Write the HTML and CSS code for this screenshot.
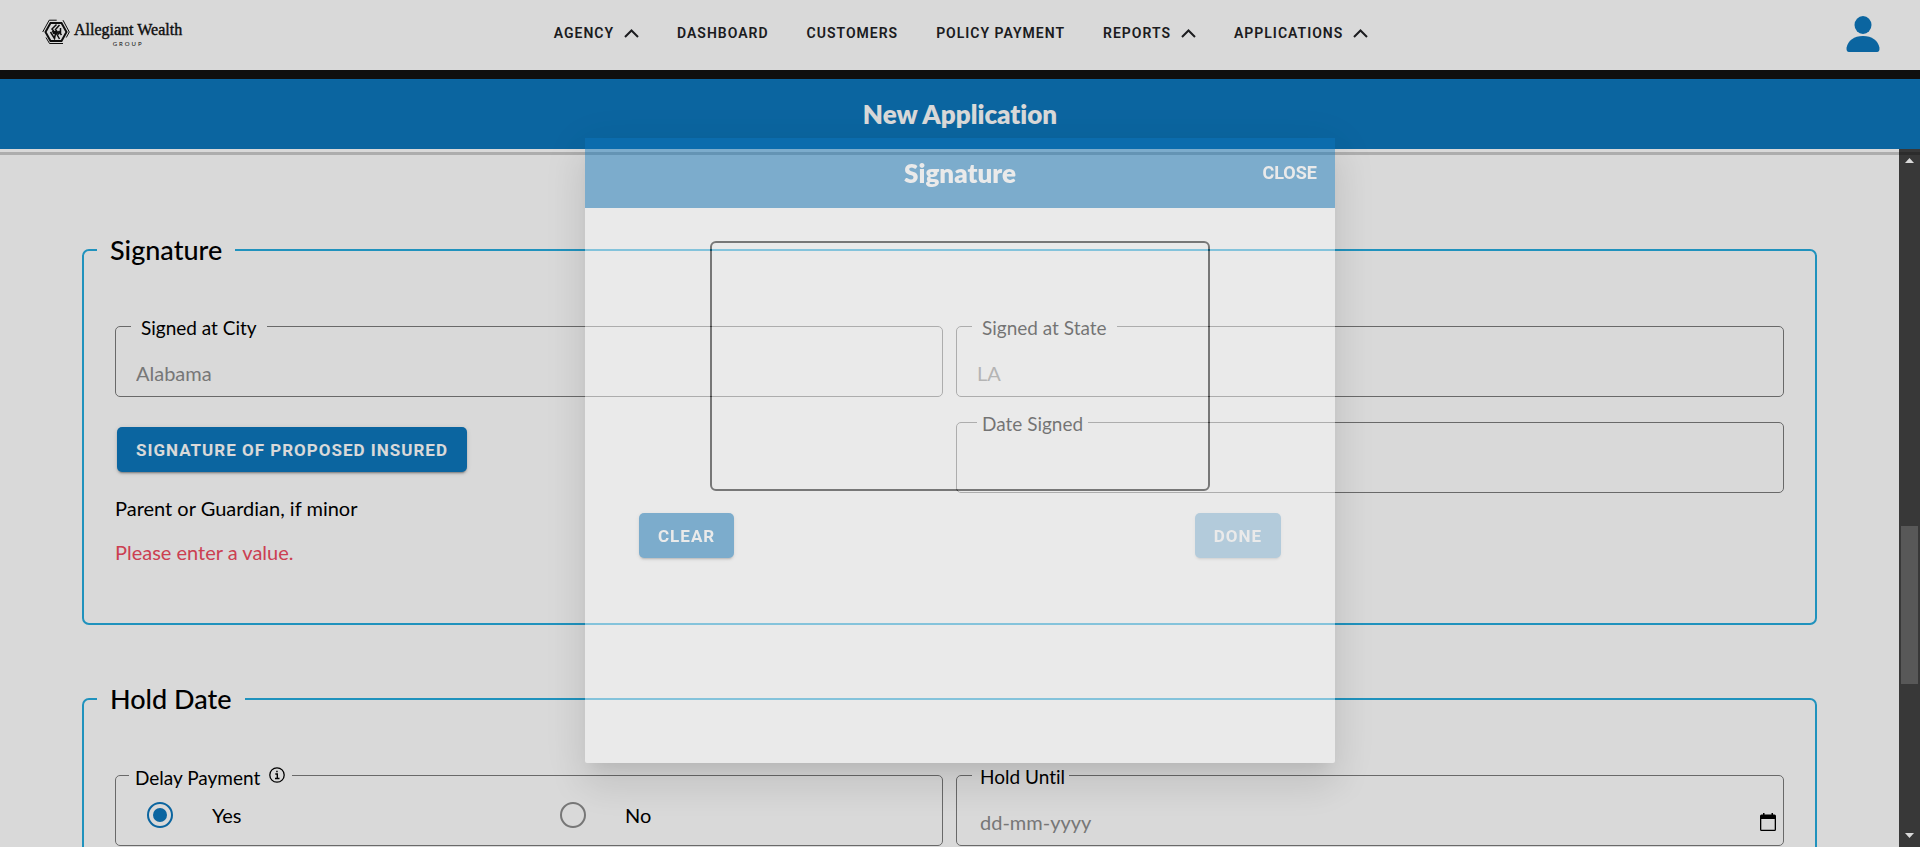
FILE: index.html
```html
<!DOCTYPE html>
<html lang="en">
<head>
<meta charset="utf-8">
<title>New Application</title>
<link rel="stylesheet" href="styles.css">
</head>
<body>
<div class="app">
  <header class="topbar">
    <a class="brand" href="#">
      <svg class="brand-mark" viewBox="0 0 28 26" fill="none" stroke="#111" aria-hidden="true">
        <path d="M8.500 4h11l5 9-5 9h-11l-5-9z" stroke-width="2"/>
        <path d="M.700 13 7.200 1.200h7.500M21 1.200 27.300 13l-3 5.500M4 18.500l3.500 6H21" stroke-width="1"/>
        <path d="M14.500 5.500 10 10l4 5M17.500 6l-4 4.500 3.500 5M8.500 13l4 6.500 1-5M13 12l4.500 8M16.500 12l3 4M10.500 12l1.500 3M18.500 9v5" stroke-width="1.500"/>
      </svg>
      <span class="brand-text"><span class="brand-name">Allegiant Wealth</span><span class="brand-sub">GROUP</span></span>
    </a>
    <nav class="nav">
      <a href="#">AGENCY <svg class="chev" viewBox="0 0 15 9"><path d="M1 8 7.500 1.500 14 8"/></svg></a>
      <a href="#">DASHBOARD</a>
      <a href="#">CUSTOMERS</a>
      <a href="#">POLICY PAYMENT</a>
      <a href="#">REPORTS <svg class="chev" viewBox="0 0 15 9"><path d="M1 8 7.500 1.500 14 8"/></svg></a>
      <a href="#">APPLICATIONS <svg class="chev" viewBox="0 0 15 9"><path d="M1 8 7.500 1.500 14 8"/></svg></a>
    </nav>
    <button class="user" type="button" aria-label="Account">
      <svg viewBox="0 0 34 37" fill="#0d77bc"><ellipse cx="17" cy="10" rx="8.500" ry="9"/><path d="M17 21C8 21 2 25.500.600 32.500.200 35 1 37 3 37h28c2 0 2.800-2 2.400-4.500C32 25.500 26 21 17 21z"/></svg>
    </button>
  </header>
  <div class="title-band"><h1>New Application</h1></div>
  <div class="workspace">
    <main class="content">
      <fieldset class="section">
        <legend>Signature</legend>
        <div class="columns">
          <div class="column">
            <fieldset class="field">
              <legend><label for="city">Signed at City</label></legend>
              <input id="city" type="text" value="Alabama">
            </fieldset>
            <div class="sign">
              <button class="btn" type="button">SIGNATURE OF PROPOSED INSURED</button>
              <p>Parent or Guardian, if minor</p>
              <p class="error">Please enter a value.</p>
            </div>
          </div>
          <div class="column">
            <fieldset class="field">
              <legend><label for="state">Signed at State</label></legend>
              <input id="state" type="text" value="LA">
            </fieldset>
            <fieldset class="field">
              <legend class="tight"><label for="signed">Date Signed</label></legend>
              <input id="signed" type="text">
            </fieldset>
          </div>
        </div>
      </fieldset>
      <fieldset class="section">
        <legend>Hold Date</legend>
        <div class="columns">
          <fieldset class="field delay">
            <legend>Delay Payment
              <svg class="info" viewBox="0 0 16 16" fill="none" stroke="#000"><circle cx="8" cy="8" r="7.200" stroke-width="1.300"/><path d="M6.300 7h2v4.500M6 11.500h4.500" stroke-width="1.400"/><path d="M7.200 4.500h1.500" stroke-width="1.700"/></svg>
            </legend>
            <div class="choices">
              <label><input type="radio" name="delay" checked><span>Yes</span></label>
              <label><input type="radio" name="delay"><span>No</span></label>
            </div>
          </fieldset>
          <fieldset class="field date">
            <legend><label for="until">Hold Until</label></legend>
            <div class="date-row">
              <input id="until" type="text" placeholder="dd-mm-yyyy">
              <button class="calendar" type="button" aria-label="Pick a date">
                <svg viewBox="0 0 16 18"><path d="M0 3a1.500 1.500 0 0 1 1.500-1.500H3V0h1.500v1.500h7V0H13v1.500h1.500A1.500 1.500 0 0 1 16 3v13.500a1.500 1.500 0 0 1-1.500 1.500h-13A1.500 1.500 0 0 1 0 16.500zM1.300 6v10.700h13.400V6z" fill-rule="evenodd"/></svg>
              </button>
            </div>
          </fieldset>
        </div>
      </fieldset>
    </main>
    <div class="scrollbar" aria-hidden="true">
      <svg class="arrow" viewBox="0 0 9 5"><path d="M0 5 4.500 0 9 5z"/></svg>
      <div class="track"><div class="thumb"></div></div>
      <svg class="arrow" viewBox="0 0 9 5"><path d="M0 0h9L4.500 5z"/></svg>
    </div>
  </div>
</div>
<div class="backdrop">
  <div class="dialog" role="dialog" aria-labelledby="dialog-title">
    <div class="dialog-head">
      <h2 id="dialog-title">Signature</h2>
      <button class="close" type="button">CLOSE</button>
    </div>
    <div class="dialog-body">
      <div class="pad"></div>
      <div class="actions">
        <button class="btn" type="button">CLEAR</button>
        <button class="btn" type="button" disabled>DONE</button>
      </div>
    </div>
  </div>
</div>
</body>
</html>
```
FILE: styles.css
```css
:root {
  --blue: #0d77bc;
  --line: #26acdf;
}
* { box-sizing: border-box; }
body {
  margin: 0;
  font-family: Lato, "Noto Sans", sans-serif;
  font-size: 20px;
  line-height: 24px;
  font-variant-ligatures: none;
  color: #000;
  background: #fff;
  overflow: hidden;
}
h1, h2, p { margin: 0; }
fieldset { margin: 0; min-width: 0; }
input, button { font: inherit; color: inherit; }
button { border: 0; background: none; padding: 0; cursor: pointer; }

.app { display: flex; flex-direction: column; height: 100vh; }

.topbar {
  display: grid;
  grid-template-columns: 1fr auto 1fr;
  align-items: center;
  flex: none;
  height: 79px;
  padding: 0 40px 4px 42px;
  border-bottom: 9px solid #121212;
}
.brand {
  display: flex;
  gap: 4px;
  color: #111;
  text-decoration: none;
}
.brand-mark { width: 28px; height: 26px; }
.brand-text { display: flex; flex-direction: column; align-items: center; }
.brand-name {
  font: 16px/22px "Liberation Serif", serif;
  -webkit-text-stroke: 0.4px #111;
}
.brand-sub { font-size: 6px; line-height: 6px; letter-spacing: 2px; }

.nav { display: flex; gap: 38px; }
.nav a {
  display: flex;
  align-items: center;
  gap: 10px;
  font-family: Roboto, sans-serif;
  font-size: 14px;
  font-weight: 600;
  line-height: 20px;
  letter-spacing: 1px;
  color: #212225;
  text-decoration: none;
}
.chev { width: 15px; height: 9px; fill: none; stroke: #212225; stroke-width: 2; }
.user { justify-self: end; width: 34px; height: 37px; }
.user svg { display: block; }

.title-band {
  position: relative;
  z-index: 1;
  display: flex;
  align-items: center;
  justify-content: center;
  flex: none;
  height: 70px;
  background: var(--blue);
  color: #fff;
}
.title-band::after {
  content: "";
  position: absolute;
  inset: calc(100% + 3px) 0 auto;
  height: 3px;
  background: rgba(0, 0, 0, .2);
}
h1, h2 { font-size: 26px; line-height: 32px; font-weight: 800; }

.workspace { display: flex; flex: 1; min-height: 0; }
.content {
  flex: 1;
  min-width: 0;
  overflow: hidden;
  padding: 84px 82px 0;
}
.section {
  min-height: 392px;
  padding: 47px 31px 20px 13px;
  border: 2px solid var(--line);
  border-radius: 7px;
}
.section + .section { margin-top: 57px; }
.section > legend {
  padding: 0 13px;
  font-size: 27px;
  font-weight: 500;
  line-height: 34px;
}
.columns {
  display: grid;
  grid-template-columns: 1fr 1fr;
  gap: 13px;
  margin-left: 18px;
}
.column { display: flex; flex-direction: column; gap: 13px; }

.field {
  height: 83px;
  padding: 0 15px;
  border: 1px solid #7c7c7c;
  border-radius: 5px;
}
.field > legend {
  height: 24px;
  padding: 4px 10px 0;
  font-size: 19px;
  line-height: 20px;
}
.field > legend.tight { margin-left: 5px; padding: 4px 5px 0; }
.field input[type="text"] {
  width: 100%;
  height: 58px;
  padding: 12px 5px 0;
  border: 0;
  outline: 0;
  background: none;
  color: #8c8c8c;
}
.info { width: 16px; height: 16px; margin-left: 4px; vertical-align: 2px; }
.sign { display: flex; flex-direction: column; align-items: flex-start; padding-top: 17px; }
.sign .btn { margin-left: 2px; }
.sign p { margin-top: 24px; }
.sign p + p { margin-top: 20px; }
.error { color: #f04a60; }

.btn {
  height: 45px;
  padding: 0 19px;
  border-radius: 5px;
  background: var(--blue);
  color: #fff;
  font-family: Roboto, sans-serif;
  font-size: 17px;
  font-weight: 700;
  letter-spacing: 1px;
  box-shadow: 0 3px 1px -2px rgba(0, 0, 0, .2), 0 2px 2px rgba(0, 0, 0, .14), 0 1px 5px rgba(0, 0, 0, .12);
}
.btn:disabled { opacity: .5; }

.field.delay { padding: 0 13px; }
.field.delay > legend { padding: 4px 7px 0 6px; }
.choices {
  display: grid;
  grid-template-columns: 1fr 1fr;
  margin: 0 -13px;
  height: 56px;
}
.choices label {
  display: flex;
  align-items: center;
  gap: 39px;
  padding-left: 31px;
}
.choices input {
  appearance: none;
  display: grid;
  place-items: center;
  width: 26px;
  height: 26px;
  margin: 0;
  border: 2px solid #8c8c8c;
  border-radius: 50%;
}
.choices input:checked { border-color: var(--blue); }
.choices input:checked::before {
  content: "";
  width: 14px;
  height: 14px;
  border-radius: 50%;
  background: var(--blue);
}
.field.date > legend { padding: 4px 4px 0 8px; }
.date-row { display: flex; margin-right: -8px; }
.field.date input { flex: 1; padding-left: 8px; }
.field.date input::placeholder { color: #8c8c8c; opacity: 1; }
.calendar { width: 16px; height: 18px; margin-top: 26px; }
.calendar svg { display: block; }

.scrollbar {
  display: flex;
  flex-direction: column;
  align-items: center;
  gap: 7px;
  flex: none;
  width: 21px;
  padding: 9px 0;
  background: #424242;
}
.arrow { width: 9px; height: 5px; fill: #fff; }
.track { flex: 1; width: 17px; padding-top: 356px; }
.thumb { height: 158px; background: #686868; }

.backdrop {
  position: fixed;
  inset: 0;
  z-index: 10;
  display: flex;
  align-items: flex-start;
  justify-content: center;
  padding-top: 138px;
  background: rgba(0, 0, 0, .15);
}
.dialog {
  width: 750px;
  height: 625px;
  border-radius: 2px;
  background: #fff;
  opacity: .45;
  box-shadow: 0 11px 15px -7px rgba(0, 0, 0, .2), 0 24px 38px 3px rgba(0, 0, 0, .14), 0 9px 46px 8px rgba(0, 0, 0, .12);
}
.dialog-head {
  display: grid;
  grid-template-columns: 1fr auto 1fr;
  align-items: center;
  height: 70px;
  padding: 0 18px;
  background: var(--blue);
  color: #fff;
}
.dialog-head h2 { grid-column: 2; }
.close {
  justify-self: end;
  font-family: Roboto, sans-serif;
  font-size: 18px;
  font-weight: 700;
}
.dialog-body { padding: 33px 54px; }
.pad {
  width: 500px;
  height: 250px;
  margin: 0 auto 22px;
  border: 2px solid #000;
  border-radius: 6px;
}
.actions { display: flex; justify-content: space-between; }
```
